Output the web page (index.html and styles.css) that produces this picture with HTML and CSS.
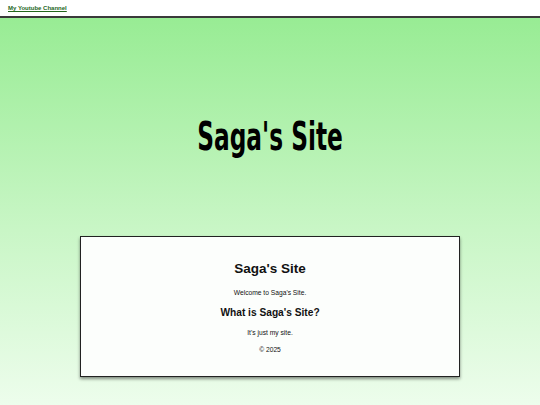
FILE: index.html
```html
<!DOCTYPE html>
<html lang="en">
<head>
<meta charset="utf-8">
<title>Saga's Site</title>
<link rel="stylesheet" href="styles.css">
</head>
<body>
<header class="topbar">
  <a class="topbar-link" href="#">My Youtube Channel</a>
</header>
<main class="page">
  <section class="hero">
    <h1 class="hero-title">Saga's Site</h1>
  </section>
  <section class="card">
    <h2 class="card-title">Saga's Site</h2>
    <p class="card-text welcome">Welcome to Saga's Site.</p>
    <h3 class="card-subtitle">What is Saga's Site?</h3>
    <p class="card-text about">It's just my site.</p>
    <p class="card-text copy">© 2025</p>
  </section>
</main>
</body>
</html>
```

FILE: styles.css
```css
html, body {
  margin: 0;
  padding: 0;
  height: 100%;
}
body {
  font-family: "Liberation Sans", Arial, sans-serif;
  color: #111;
  display: flex;
  flex-direction: column;
  background: #ffffff;
}
.topbar {
  background: #ffffff;
  height: 16px;
  border-bottom: 2px solid #3a3a3a;
  display: flex;
  align-items: center;
  padding-left: 8px;
}
.topbar-link {
  font-size: 6px;
  font-weight: bold;
  color: #23661c;
  text-decoration: underline;
}
.page {
  flex: 1;
  background: linear-gradient(to bottom, #98ec94 0%, #c9f6c6 55%, #edfdec 100%);
  display: flex;
  flex-direction: column;
  align-items: center;
}
.hero {
  padding: 104px 0 87px;
}
.hero-title {
  margin: 0;
  font-family: "DejaVu Sans", sans-serif;
  font-weight: bold;
  font-size: 23.3px;
  line-height: 27px;
  transform: scaleY(1.7);
  color: #000;
}
.card {
  width: 378px;
  background: #fcfefc;
  border: 1px solid #222;
  box-shadow: 0 2px 3px rgba(0, 0, 0, 0.45);
  display: flex;
  flex-direction: column;
  align-items: center;
  padding: 24px 0 23px;
}
.card-title {
  margin: 0;
  font-size: 13.5px;
  font-weight: bold;
}
.card-text {
  margin: 0;
  font-size: 6.7px;
}
.welcome {
  margin-top: 13px;
}
.card-subtitle {
  margin: 11px 0 0;
  font-size: 10.2px;
  font-weight: bold;
}
.about {
  margin-top: 11px;
}
.copy {
  margin-top: 9.5px;
}
```
